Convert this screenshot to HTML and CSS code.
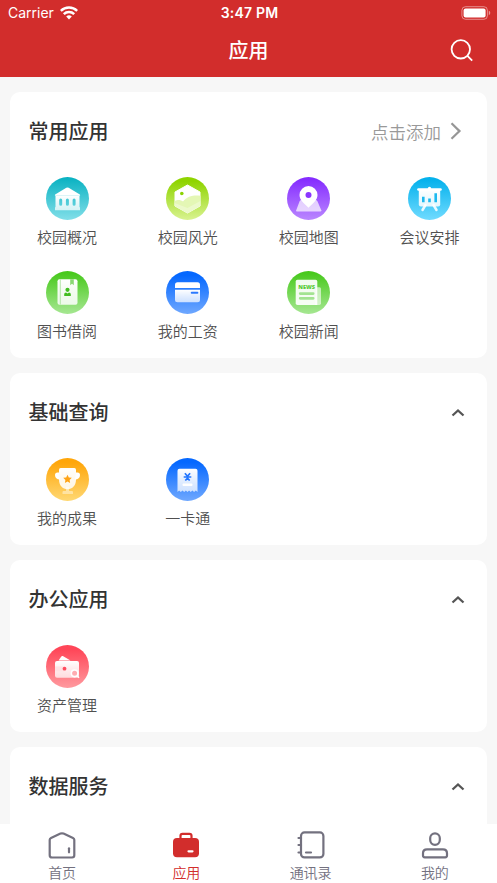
FILE: index.html
```html
<!DOCTYPE html>
<html lang="zh-CN">
<head>
<meta charset="utf-8">
<meta name="viewport" content="width=device-width, initial-scale=1">
<title>应用</title>
<link rel="stylesheet" href="styles.css">
</head>
<body>
<svg class="defs" width="0" height="0" aria-hidden="true">
  <defs>
    <linearGradient id="teal" x2="0" y2="1"><stop stop-color="#07b1c1"/><stop offset="1" stop-color="#82dfe9"/></linearGradient>
    <linearGradient id="lime" x2="0" y2="1"><stop offset=".1" stop-color="#8fd400"/><stop offset="1" stop-color="#d9f391"/></linearGradient>
    <linearGradient id="violet" x2="0" y2="1"><stop offset=".05" stop-color="#852cff"/><stop offset="1" stop-color="#ba87ff"/></linearGradient>
    <linearGradient id="sky" x2="0" y2="1"><stop offset=".05" stop-color="#04b1ec"/><stop offset="1" stop-color="#70dbff"/></linearGradient>
    <linearGradient id="green" x2="0" y2="1"><stop offset=".05" stop-color="#48c91d"/><stop offset="1" stop-color="#a6e792"/></linearGradient>
    <linearGradient id="blue" x2="0" y2="1"><stop offset=".1" stop-color="#0568ff"/><stop offset="1" stop-color="#6fa8ff"/></linearGradient>
    <linearGradient id="amber" x2="0" y2="1"><stop offset=".1" stop-color="#ffa60a"/><stop offset="1" stop-color="#ffd873"/></linearGradient>
    <linearGradient id="coral" x2="0" y2="1"><stop offset=".1" stop-color="#ff4658"/><stop offset="1" stop-color="#ff9a9f"/></linearGradient>
    <linearGradient id="fade" x2="0" y2="1"><stop stop-color="#fff"/><stop offset="1" stop-color="#fff" stop-opacity=".72"/></linearGradient>
    <linearGradient id="soft" x2="0" y2="1"><stop stop-color="#fff"/><stop offset="1" stop-color="#fff" stop-opacity=".84"/></linearGradient>
  </defs>
</svg>

<header class="header">
  <div class="status">
    <div class="carrier">Carrier
      <svg width="18" height="14" viewBox="0 0 18 14"><g fill="none" stroke="#fff" stroke-width="2.5"><path d="M.8 4.9a11.8 11.8 0 0 1 16.4 0"/><path d="M3.800 8.100a7.500 7.500 0 0 1 10.400 0"/></g><path d="M9 13.400 6.200 10.500a4 4 0 0 1 5.600 0z" fill="#fff"/></svg>
    </div>
    <div class="time">3:47 PM</div>
    <svg class="battery" width="30" height="14" viewBox="0 0 30 14"><rect x=".9" y=".7" width="25.500" height="12.600" rx="3.600" fill="none" stroke="#fff" stroke-opacity=".45"/><rect x="2.600" y="2.400" width="22" height="9.200" rx="2" fill="#fff"/><path d="M27.800 4.800v4.400q1.500-.6 1.500-2.200t-1.500-2.200" fill="#fff" fill-opacity=".5"/></svg>
  </div>
  <div class="navbar">
    <h1>应用</h1>
    <svg class="search" width="24" height="24" viewBox="0 0 24 24" fill="none" stroke="#fff" stroke-width="1.800"><circle cx="10.800" cy="10.300" r="9.200"/><path d="m17.200 16.700 5 5"/></svg>
  </div>
</header>

<main class="content">
  <section class="card">
    <div class="card-head"><h2>常用应用</h2>
      <div class="add">点击添加<svg width="12" height="18" viewBox="0 0 12 18" fill="none" stroke="#969696" stroke-width="2.200"><path d="m1.500 1.300 8 7.800-8 7.700"/></svg></div>
    </div>
    <div class="apps">
      <div class="app">
        <svg class="icon" viewBox="0 0 43 43"><circle cx="21.500" cy="21.500" r="21.500" fill="url(#teal)"/><path d="M9.200 18.800q-.8-.5 0-1.200L20.300 10.800q1.200-.7 2.400 0l11.100 6.800q.8.7 0 1.200z" fill="#fff"/><path fill="url(#fade)" fill-rule="evenodd" d="M9.500 18.700h24v11.600h.5v2.900H9v-2.900h.5zM13.200 23v4.200a1.500 1.500 0 0 0 3 0V23a1.500 1.500 0 0 0-3 0m6.700 0v4.200a1.500 1.500 0 0 0 3 0V23a1.500 1.500 0 0 0-3 0m6.700 0v4.200a1.500 1.500 0 0 0 3 0V23a1.500 1.500 0 0 0-3 0"/></svg>
        <span>校园概况</span></div>
      <div class="app">
        <svg class="icon" viewBox="0 0 43 43"><circle cx="21.500" cy="21.500" r="21.500" fill="url(#lime)"/><path d="M21.500 8 34 15v14L21.500 36 9 29V15z" fill="#fff" stroke="#fff" stroke-linejoin="round"/><path d="M8.600 24c4-1.500 5.600-1.200 8.400.5 4-5.200 10.500-6.500 17.400-5.700V29L21.500 36.200 8.600 29z" fill="#e4f7b5"/><path d="M8.600 26 21.500 31l12.900-7v5L21.500 36.200 8.600 29z" fill="#fff" opacity=".3"/><circle cx="15.800" cy="16.500" r="1.800" fill="#8bd302"/></svg>
        <span>校园风光</span></div>
      <div class="app">
        <svg class="icon" viewBox="0 0 43 43"><circle cx="21.500" cy="21.500" r="21.500" fill="url(#violet)"/><path d="M14.500 23h14q1.300 0 1.800 1l4 9.300q.3 1.200-1 1.200H10q-1.200 0-.8-1.200l3.500-9.300q.6-1 1.800-1" fill="#fff" fill-opacity=".7"/><path d="M21.500 30.800C16.800 26.200 12.500 22.800 12.500 18a9 9 0 0 1 18 0c0 4.800-4.300 8.200-9 12.800" fill="#fff"/><circle cx="21.500" cy="18" r="3" fill="#8b35ff"/></svg>
        <span>校园地图</span></div>
      <div class="app">
        <svg class="icon" viewBox="0 0 43 43"><circle cx="21.500" cy="21.500" r="21.500" fill="url(#sky)"/><path d="m17.500 28-3 5m11-5 3 5" stroke="#eafaff" stroke-width="2.500" stroke-linecap="round"/><path d="M10.800 12.500h21.400v15q0 2-2 2H12.800q-2 0-2-2z" fill="url(#soft)"/><rect x="9.200" y="11.300" width="24.600" height="2.400" rx="1.200" fill="#fff"/><circle cx="21.500" cy="11.500" r="1.700" fill="#fff"/><path d="M15.300 19.700v5.500M21.500 21.600v3.600M27.700 16.200v9" stroke="#1bb9ef" stroke-width="2.600"/></svg>
        <span>会议安排</span></div>
      <div class="app">
        <svg class="icon" viewBox="0 0 43 43"><circle cx="21.500" cy="21.500" r="21.500" fill="url(#green)"/><rect x="11.500" y="8.300" width="20" height="25.400" rx="2" fill="url(#soft)"/><path d="M14.300 8.500v25" stroke="#a5df95" stroke-width=".8"/><path d="M24.200 8.300h3.600v6L26 12.800l-1.800 1.500z" fill="#8ad873"/><circle cx="21.500" cy="18.800" r="2.100" fill="#42bd20"/><path d="M18.200 25v-1.800q0-1.800 1.800-1.800l1.500 1.200 1.500-1.200q1.800 0 1.800 1.800V25z" fill="#42bd20"/></svg>
        <span>图书借阅</span></div>
      <div class="app">
        <svg class="icon" viewBox="0 0 43 43"><circle cx="21.500" cy="21.500" r="21.500" fill="url(#blue)"/><path d="M9 17v-3.200q0-2.500 2.500-2.500h20q2.500 0 2.500 2.500V17z" fill="#fff"/><path d="M9 18.700h25v10q0 2.500-2.500 2.500h-20Q9 31.200 9 28.700z" fill="url(#fade)"/><rect x="24.800" y="20.700" width="7.500" height="2" rx=".8" fill="#2b79ff"/></svg>
        <span>我的工资</span></div>
      <div class="app">
        <svg class="icon" viewBox="0 0 43 43"><circle cx="21.500" cy="21.500" r="21.500" fill="url(#green)"/><path d="M29 16.300h3.500q1.500 0 1.500 1.500v14.500q0 1.700-1.700 1.700H28z" fill="#fff" opacity=".6"/><path d="M10.500 8.800h18q1.800 0 1.800 1.800V34H10.500q-1.800 0-1.800-1.800V10.600q0-1.800 1.800-1.800" fill="#fff" fill-opacity=".92"/><text class="news" x="19.700" y="18.300" text-anchor="middle" fill="#59cb37">NEWS</text><path d="M13.200 22.600h13M13.200 27.300h13" stroke="#a3e391" stroke-width="2.700" stroke-linecap="round"/></svg>
        <span>校园新闻</span></div>
    </div>
  </section>

  <section class="card">
    <div class="card-head"><h2>基础查询</h2><svg class="chevron" viewBox="0 0 14 10"><path d="m1.500 7.500 5.500-5 5.500 5"/></svg></div>
    <div class="apps">
      <div class="app">
        <svg class="icon" viewBox="0 0 43 43"><circle cx="21.500" cy="21.500" r="21.500" fill="url(#amber)"/><path d="M13 14.500h-1.500Q9 14.500 9 17c0 2.800 1.800 4.500 5 4.500M30 14.500h1.500Q34 14.500 34 17c0 2.800-1.800 4.500-5 4.500" fill="#fff"/><path d="M20 29h3v4h3q1 0 1 1v2H16.500v-2q0-1 1-1H20z" fill="#ffe3a2"/><path d="M14.700 10h13.600q1.700 0 1.700 1.700v9.800c0 6-3.500 9.700-8.500 9.700s-8.500-3.700-8.500-9.700v-9.800q0-1.700 1.700-1.700" fill="url(#soft)"/><path d="m21.500 16.700 1.300 2.700 3 .4-2.200 2.100.5 3-2.600-1.400-2.600 1.400.5-3-2.200-2.100 3-.4z" fill="#ffa314"/></svg>
        <span>我的成果</span></div>
      <div class="app">
        <svg class="icon" viewBox="0 0 43 43"><circle cx="21.500" cy="21.500" r="21.500" fill="url(#blue)"/><path d="M13.500 10.700h16q2 0 2 2V34l-1.700-1.500-1.700 1.500-1.700-1.500-1.700 1.500-1.600-1.500-1.600 1.500-1.600-1.500-1.700 1.500-1.700-1.500-1.700 1.500-1.700-1.500-1.600 1.500V12.700q0-2 2-2" fill="url(#fade)"/><path d="m18.900 15.200 2.600 3 2.600-3M17.700 19h7.600M21.500 18.500v1.500M19.300 22.500l2.200-2.200 2.200 2.200" fill="none" stroke="#2175ff" stroke-width="1.700"/><rect x="16.500" y="25.500" width="10" height="2.500" rx="1" fill="#fff"/></svg>
        <span>一卡通</span></div>
    </div>
  </section>

  <section class="card">
    <div class="card-head"><h2>办公应用</h2><svg class="chevron" viewBox="0 0 14 10"><path d="m1.500 7.500 5.500-5 5.500 5"/></svg></div>
    <div class="apps">
      <div class="app">
        <svg class="icon" viewBox="0 0 43 43"><circle cx="21.500" cy="21.500" r="21.500" fill="url(#coral)"/><path d="m12.500 15.600 2.800-4.100q.6-.8 1.500-.4l7.700 4.500z" fill="#fff"/><rect x="9" y="16.100" width="24" height="16.700" rx="2" fill="url(#fade)"/><path d="M9 21.500h9q2.400 0 2.400 2.400T18 26.300H9z" fill="#ffdfe2" opacity=".85"/><circle cx="18.500" cy="23.700" r="1.900" fill="#ff4c5f"/><circle cx="28.600" cy="28.300" r="3.300" fill="#ffacb1" stroke="#fff" stroke-width="1.600"/><path d="m31 30.800 2 2" stroke="#fff" stroke-width="1.600"/></svg>
        <span>资产管理</span></div>
    </div>
  </section>

  <section class="card">
    <div class="card-head"><h2>数据服务</h2><svg class="chevron" viewBox="0 0 14 10"><path d="m1.500 7.500 5.500-5 5.500 5"/></svg></div>
  </section>
</main>

<nav class="tabs">
  <div class="tab"><svg viewBox="0 0 28 28" fill="none" stroke="#73717f" stroke-width="2.200" stroke-linejoin="round" stroke-linecap="round"><path d="M1.700 8.800q0-1.300 1.300-1.900l9.500-4.300q1.500-.6 3 0L25 6.900q1.300.6 1.300 1.900v15.500q0 2.200-2.200 2.200H3.900q-2.200 0-2.200-2.200z"/><path d="M21 17.300v4"/></svg><span>首页</span></div>
  <div class="tab active"><svg viewBox="0 0 28 28"><path d="M8.500 8V4.800q0-2 2-2h7q2 0 2 2V8" fill="none" stroke="#d22d2c" stroke-width="2.200"/><rect x="1" y="7" width="26" height="19.200" rx="4" fill="#d22d2c"/><path d="M16.500 20.300h4" stroke="#fff" stroke-width="2.200" stroke-linecap="round"/></svg><span>应用</span></div>
  <div class="tab"><svg viewBox="0 0 28 28" fill="none" stroke="#73717f" stroke-width="2.200" stroke-linecap="round"><rect x="4" y="1.400" width="22.400" height="25" rx="3.500"/><path d="M1.500 7H4M1.500 14H4M1.500 21.500H4M9 21.500h5"/></svg><span>通讯录</span></div>
  <div class="tab"><svg viewBox="0 0 28 28" fill="none" stroke="#73717f" stroke-width="2.200"><rect x="9.200" y="2.300" width="9.600" height="11.600" rx="4.800"/><path d="M6 18.300h16q4 0 4 4v2.300q0 1.700-1.700 1.700H3.700Q2 26.300 2 24.600v-2.300q0-4 4-4z"/></svg><span>我的</span></div>
</nav>
</body>
</html>
```
FILE: styles.css
```css
* { box-sizing: border-box; }
body {
  margin: 0;
  height: 883px;
  display: flex;
  flex-direction: column;
  overflow: hidden;
  background: #f7f7f7;
  font-family: Inter, "Noto Sans CJK SC", sans-serif;
}
svg { display: block; flex: none; }
.defs { position: absolute; }
h1, h2 { margin: 0; font-size: 20px; font-weight: 500; line-height: 30px; }
.header { height: 77px; flex: none; background: #d22d2c; color: #fff; }
.status {
  height: 25px;
  padding: 0 6px 0 8px;
  display: grid;
  grid-template-columns: 1fr auto 1fr;
  align-items: center;
  font-size: 14px;
}
.carrier { display: flex; align-items: center; gap: 6px; }
.time { font-weight: 600; letter-spacing: .2px; }
.battery { justify-self: end; }
.navbar {
  height: 52px;
  padding: 0 23px;
  display: grid;
  grid-template-columns: 1fr auto 1fr;
  align-items: center;
}
.navbar h1 { grid-column: 2; }
.search { justify-self: end; }
.content {
  flex: 1;
  min-height: 0;
  overflow: hidden;
  padding: 14.500px 10px 0;
  display: flex;
  flex-direction: column;
  gap: 15px;
}
.card { flex: none; background: #fff; border-radius: 10px; padding-bottom: 14px; }
.card-head {
  height: 85px;
  padding: 25.500px 22px 29.500px 18.500px;
  display: flex;
  align-items: center;
  justify-content: space-between;
  color: #333;
}
.add { display: flex; align-items: center; gap: 9px; padding: 0 3px 2px 0; font-size: 17.500px; color: #999; font-weight: 350; }
.chevron { width: 14px; height: 10px; fill: none; stroke: #555; stroke-width: 2.300; }
.apps {
  padding: 0 27.500px 0 27px;
  display: grid;
  grid-template-columns: repeat(4, 60px);
  justify-content: space-between;
  row-gap: 21px;
}
.app {
  height: 73px;
  display: flex;
  flex-direction: column;
  align-items: center;
  gap: 6px;
  font-size: 15px;
  font-weight: 350;
  line-height: 24px;
  color: #505050;
  white-space: nowrap;
}
.icon { width: 43px; height: 43px; }
.news { font: 800 5.600px "Open Sans", sans-serif; }
.tabs {
  height: 59px;
  flex: none;
  display: grid;
  grid-template-columns: repeat(4, 1fr);
  background: #fff;
}
.tab {
  padding-top: 7px;
  display: flex;
  flex-direction: column;
  align-items: center;
  gap: 4px;
  font-size: 14px;
  line-height: 20px;
  color: #73717f;
  font-weight: 350;
}
.tab svg { width: 28px; height: 28px; }
.active { color: #d22d2c; }
```
